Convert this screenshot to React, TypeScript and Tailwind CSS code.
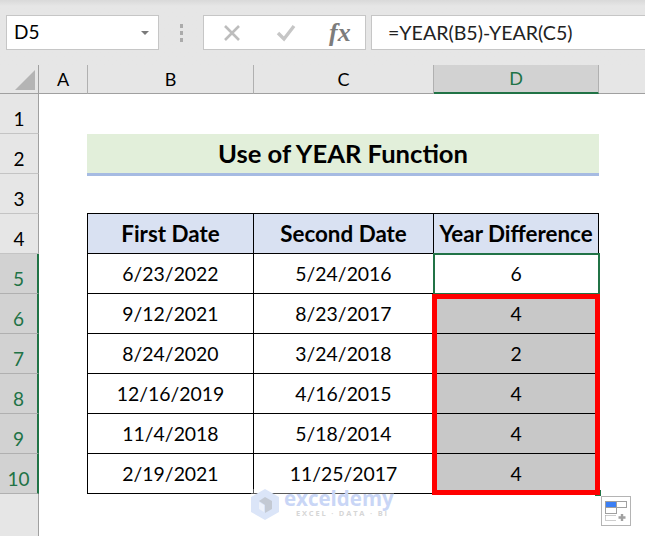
import React from "react";

const rows = [
  ["6/23/2022", "5/24/2016", "6"],
  ["9/12/2021", "8/23/2017", "4"],
  ["8/24/2020", "3/24/2018", "2"],
  ["12/16/2019", "4/16/2015", "4"],
  ["11/4/2018", "5/18/2014", "4"],
  ["2/19/2021", "11/25/2017", "4"],
];

function RowHead({ n, selected }: { n: number; selected?: boolean }) {
  return (
    <div
      className={
        selected
          ? "flex items-end justify-center pb-px bg-[#d2d2d2] text-[#217346] border-b border-b-[#b0b0b0] border-r-2 border-r-[#217346] text-[19px] leading-[26px]"
          : "flex items-end justify-center pb-px bg-[#e6e6e6] text-black border-b border-b-[#c4c4c4] border-r border-r-[#a0a0a0] text-[19px] leading-[26px]"
      }
    >
      {n}
    </div>
  );
}

function ColHead({ label, selected }: { label: string; selected?: boolean }) {
  return (
    <div
      className={
        selected
          ? "flex items-center justify-center bg-[#d2d2d2] text-[#217346] border-b-2 border-b-[#217346] border-r border-r-[#b0b0b0] text-[18px]"
          : "flex items-center justify-center bg-[#e6e6e6] text-black border-b border-b-[#a0a0a0] border-r border-r-[#b0b0b0] text-[18px]"
      }
    >
      {label}
    </div>
  );
}

export default function App() {
  return (
    <div className="w-[645px] h-[536px] overflow-hidden bg-white font-['Lato','Liberation_Sans',sans-serif] text-black">
      {/* Formula bar */}
      <div className="h-[65px] bg-[#e6e6e6] bg-gradient-to-b from-[#d9d9d9] to-[#e6e6e6] to-[6px] flex items-start pt-[15px] pl-[6px]">
        <div className="w-[153px] h-[35px] bg-white border border-[#c6c6c6] flex items-center justify-between pl-[7px] pr-[9px] text-[19px]">
          <span>D5</span>
          <span className="w-0 h-0 border-x-[4px] border-x-transparent border-t-[4px] border-t-[#7a7a7a]" />
        </div>
        <div className="w-[44px] h-[35px] flex flex-col items-center justify-center gap-[3px]">
          <span className="w-[3px] h-[4px] bg-[#ababab]" />
          <span className="w-[3px] h-[4px] bg-[#ababab]" />
          <span className="w-[3px] h-[4px] bg-[#ababab]" />
        </div>
        <div className="w-[163px] h-[35px] bg-white border border-[#c6c6c6] flex items-center">
          <svg width="20" height="20" viewBox="0 0 20 20" className="ml-[18px]">
            <path d="M3 3 L17 17 M17 3 L3 17" stroke="#bdbdbd" strokeWidth="2.6" fill="none" />
          </svg>
          <svg width="22" height="20" viewBox="0 0 22 20" className="ml-[33px]">
            <path d="M3 10 L9 16 L19 3" stroke="#c6c6c6" strokeWidth="3.4" fill="none" />
          </svg>
          <span className="ml-[32px] font-['Liberation_Serif',serif] italic font-bold text-[26px] text-[#7c7c7c] leading-none">
            fx
          </span>
        </div>
        <div className="ml-[5px] flex-1 h-[35px] bg-white border border-[#c6c6c6] border-r-0 flex items-center pl-[16px] text-[19.6px] text-[#222]">
          =YEAR(B5)-YEAR(C5)
        </div>
      </div>

      {/* Sheet */}
      <div className="relative grid grid-cols-[39px_49px_166px_180px_165px_46px] grid-rows-[29px_40px_40px_40px_40px_40px_40px_40px_40px_40px_40px_43px]">
        {/* Header row */}
        <div className="relative bg-[#e6e6e6] border-r border-r-[#a0a0a0] border-b border-b-[#a0a0a0]">
          <svg width="38" height="28" viewBox="0 0 38 28" className="absolute left-0 top-0">
            <path d="M15 25 L35 5 L35 25 Z" fill="#b4b4b4" />
          </svg>
        </div>
        <ColHead label="A" />
        <ColHead label="B" />
        <ColHead label="C" />
        <ColHead label="D" selected />
        <div className="bg-[#e6e6e6] border-b border-b-[#a0a0a0]" />

        {/* Row 1 */}
        <RowHead n={1} />
        <div className="col-span-5" />

        {/* Row 2 */}
        <RowHead n={2} />
        <div />
        <div className="relative col-span-3 -ml-px mb-px bg-[#e2efda] flex items-center justify-center font-bold text-[25.6px]">
          Use of YEAR Function
          <span className="absolute left-0 right-0 bottom-[-3px] h-[3px] bg-[#a6bbe2]" />
        </div>
        <div />

        {/* Row 3 */}
        <RowHead n={3} />
        <div />
        <div className="col-span-3 -ml-px border-b border-b-black" />
        <div />

        {/* Row 4 */}
        <RowHead n={4} />
        <div className="border-r border-r-black" />
        {["First Date", "Second Date", "Year Difference"].map((h) => (
          <div
            key={h}
            className="flex items-center justify-center bg-[#d9e1f2] border-r border-b border-black font-bold text-[22.4px] whitespace-nowrap"
          >
            {h}
          </div>
        ))}
        <div />

        {/* Data rows */}
        {rows.map((r, i) => (
          <React.Fragment key={i}>
            <RowHead n={i + 5} selected />
            <div className="border-r border-r-black" />
            <div className="flex items-center justify-center border-r border-b border-black text-[19.4px]">{r[0]}</div>
            <div className="flex items-center justify-center border-r border-b border-black text-[19.4px]">{r[1]}</div>
            <div
              className={
                i === 0
                  ? "flex items-center justify-center border-r border-b border-black text-[19.4px]"
                  : "flex items-center justify-center border-r border-b border-black bg-[#c8c8c8] text-[19.4px]"
              }
            >
              {r[2]}
            </div>
            <div />
          </React.Fragment>
        ))}

        {/* Row below the last row header */}
        <div className="bg-[#e6e6e6] border-r border-r-[#a0a0a0]" />
        <div className="col-span-5" />

        {/* Active cell outline */}
        <div className="absolute col-start-5 col-end-6 row-start-6 row-end-7 -left-px -top-px -right-px -bottom-px border-2 border-[#217346]" />
        {/* Fill handle */}
        <div className="absolute col-start-5 col-end-6 row-start-11 row-end-12 right-[-2px] bottom-[-2px] w-[6px] h-[6px] bg-[#217346]" />
        {/* Red highlight */}
        <div className="absolute col-start-5 col-end-6 row-start-7 row-end-12 left-[-2px] top-0 right-[-1px] bottom-[-1px] border-[5px] border-[#ff0000]" />
        {/* Quick analysis button */}
        <div className="absolute col-start-6 col-end-7 row-start-12 row-end-13 left-[2px] top-[2px] w-[30px] h-[30px] bg-white border border-[#b4b4b4]">
          <svg width="28" height="28" viewBox="0 0 28 28" className="absolute left-0 top-0">
            <rect x="3.5" y="4.5" width="11" height="6" fill="#3b7ff5" stroke="#a0a0a0" />
            <rect x="14.5" y="4.5" width="10" height="6" fill="#fff" stroke="#a0a0a0" />
            <rect x="3.5" y="10.5" width="11" height="6" fill="#fff" stroke="#a0a0a0" />
            <path d="M3.5 18.5 V23.5 H14 M3.5 18.5 H14" stroke="#9a9a9a" strokeDasharray="1 1" fill="none" />
            <path d="M20 17 V24 M16.5 20.5 H23.5" stroke="#a0a0a0" strokeWidth="2.4" fill="none" />
          </svg>
        </div>
        {/* Watermark */}
        <div className="absolute left-[251px] top-[424px] w-[143px] flex items-start gap-[5px] bg-white/35">
          <svg width="28" height="31" viewBox="0 0 28 31" className="shrink-0">
            <path d="M14 0 L28 8 L28 23 L14 31 L0 23 L0 8 Z" fill="#dbe5f8" />
            <path d="M14 8 L21 12 L21 20 L14 24 L14 16 L8 12 Z" fill="#c3c9d3" />
            <path d="M8 13 L13 16 L13 23 L8 20 Z" fill="#eef2fa" />
          </svg>
          <div className="flex flex-col items-start">
            <span className="text-[20.5px] font-bold leading-[19px] text-[#c9d6f6] font-['Open_Sans',sans-serif]">
              exceldemy
            </span>
            <span className="ml-[12px] text-[7.5px] font-bold leading-[10px] tracking-[1.8px] text-[#d6d6d6] font-['Open_Sans',sans-serif] whitespace-nowrap">
              EXCEL · DATA · BI
            </span>
          </div>
        </div>
      </div>
    </div>
  );
}
